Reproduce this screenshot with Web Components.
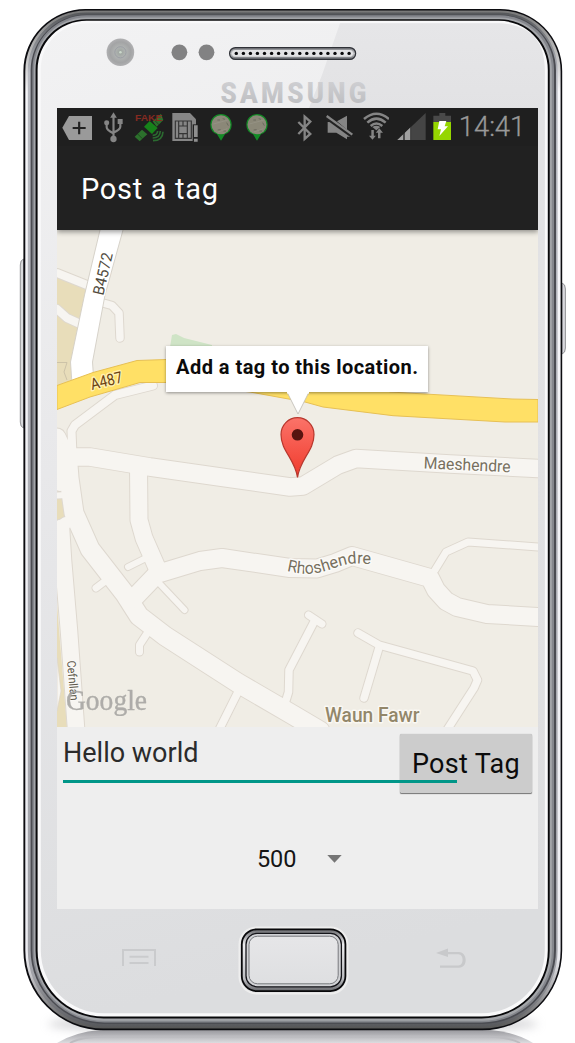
<!DOCTYPE html>
<html lang="en"><head><meta charset="utf-8"><title>Post a tag</title>
<style>html,body{margin:0;background:#fff;overflow:hidden}body{font-family:Roboto,"Liberation Sans",sans-serif}</style></head>
<body>
<phone-frame>
  <status-bar></status-bar>
  <app-bar>Post a tag</app-bar>
  <tag-map>Add a tag to this location.</tag-map>
  <tag-form><span slot="message">Hello world</span><span slot="action">Post Tag</span><span slot="radius">500</span></tag-form>
</phone-frame>
<script>
const define=(name,html,setup)=>customElements.define(name,class extends HTMLElement{
  constructor(){super();const r=this.attachShadow({mode:'open'});const t=document.createElement('template');
    t.innerHTML=typeof html==='function'?html(this):html;r.append(t.content.cloneNode(true));if(setup)setup(r,this);}
});

/* ---------- handset body ---------- */
const body=(l,t,r,b,fill,rt,rb)=>`<path fill="${fill}" d="M${l},${t+rt}A${rt},${rt} 0 0 1 ${l+rt},${t}H${r-rt}A${rt},${rt} 0 0 1 ${r},${t+rt}V${b-rb}A${rb},${rb} 0 0 1 ${r-rb},${b}H${l+rb}A${rb},${rb} 0 0 1 ${l},${b-rb}Z"/>`;
const shell=[
 [23.4,9,562.2,1030.3,'#0c0c10',62,80],
 [25.3,10.4,560.6,1028.6,'url(#rimA)',60.5,78],
 [27.8,12.4,557.6,1026.6,'url(#rimB)',58,76],
 [30.6,14.6,556,1024,'#4b4c52',56,74],
 [32.4,15.3,554,1022.5,'#85878d',54,72],
 [34,17.6,551.8,1020.8,'#a3a5a9',52,70],
 [35.6,19.2,549.7,1018.4,'#08080a',50.5,68],
 [37.6,20.8,547.8,1016.6,'#f9f9fa',49,66],
 [40.8,23.2,544.8,1013.2,'url(#face)',46,63]
].map(a=>body(...a)).join('');
const holes=Array.from({length:17},(_,i)=>`<circle cx="${(236.3+i*7.05).toFixed(1)}" cy="53.4" r="1.7"/>`).join('');
define('phone-frame',`<style>
:host{display:block;position:relative;box-sizing:border-box;width:575px;height:1043px;padding:108px 37px 134px 57px;overflow:hidden}
.shell{position:absolute;inset:0;display:block}
.screen{position:relative;display:grid;grid-template-rows:38px 84px 497px 182px;height:801px;background:#eee}
</style>
<svg class="shell" width="575" height="1043" viewBox="0 0 575 1043">
<defs>
<linearGradient id="rimA" x1="0" y1="0" x2="0" y2="1"><stop offset="0" stop-color="#777"/><stop offset=".03" stop-color="#aaa"/><stop offset=".08" stop-color="#f6f6f9"/><stop offset=".93" stop-color="#ececf1"/><stop offset="1" stop-color="#555"/></linearGradient>
<linearGradient id="rimB" x1="0" y1="0" x2="0" y2="1"><stop offset="0" stop-color="#55575a"/><stop offset=".06" stop-color="#b9bbc2"/><stop offset=".95" stop-color="#a2a3a9"/><stop offset="1" stop-color="#57585c"/></linearGradient>
<linearGradient id="face" x1="0" y1="0" x2=".12" y2="1"><stop offset="0" stop-color="#f2f2f3"/><stop offset=".45" stop-color="#e8e8ea"/><stop offset="1" stop-color="#dcdddf"/></linearGradient>
<linearGradient id="glass" x1="0" y1="0" x2="0" y2="1"><stop offset="0" stop-color="#e6e6e8"/><stop offset=".1" stop-color="#e2e2e4"/><stop offset="1" stop-color="#dcdcde" stop-opacity=".4"/></linearGradient>
<linearGradient id="logo" x1="0" y1="0" x2="0" y2="1"><stop offset="0" stop-color="#d3d3d6"/><stop offset="1" stop-color="#b9babd"/></linearGradient>
<linearGradient id="mesh" x1="0" y1="0" x2="0" y2="1"><stop offset="0" stop-color="#77797d"/><stop offset=".5" stop-color="#c9cacd"/><stop offset="1" stop-color="#66686d"/></linearGradient>
<radialGradient id="cam"><stop offset="0" stop-color="#9ba39d"/><stop offset=".4" stop-color="#b0b3b2"/><stop offset=".75" stop-color="#a3a4a5"/><stop offset="1" stop-color="#b0b0b2"/></radialGradient>
<linearGradient id="keyFill" x1="0" y1="0" x2="0" y2="1"><stop offset="0" stop-color="#e6e6e8"/><stop offset="1" stop-color="#dedfe1"/></linearGradient>
<linearGradient id="keyRim" x1="0" y1="0" x2="0" y2="1"><stop offset="0" stop-color="#66676b"/><stop offset=".25" stop-color="#eeeef0"/><stop offset=".8" stop-color="#bdbec2"/><stop offset="1" stop-color="#67686c"/></linearGradient>
<linearGradient id="floor" x1="0" y1="0" x2="0" y2="1"><stop offset="0" stop-color="#99999e"/><stop offset="1" stop-color="#dcdcdf"/></linearGradient>
<filter id="soft" x="-10%" y="-100%" width="120%" height="300%"><feGaussianBlur stdDeviation="5"/></filter>
</defs>
<ellipse cx="293" cy="1024" rx="245" ry="11" fill="#a9a9ae" opacity=".5" filter="url(#soft)"/>
<path d="M57,1043Q75,1032 100,1030H490Q515,1032 533,1043Z" fill="url(#floor)"/>
<path d="M70,1043Q80,1037 105,1036.5H485Q510,1037 520,1043" fill="none" stroke="#bcbcc0" stroke-width="2"/>
<path d="M23.5,259Q20.3,260 20.3,265V422Q20.3,427 23.5,428Z" fill="#d9dadd" stroke="#88898c" stroke-width=".9"/>
<path d="M562,283Q565.4,284 565.4,289V348Q565.4,353 562,354Z" fill="#d9d9de" stroke="#88898c" stroke-width=".9"/>
${shell}
<path d="M340,23.2H499Q544.8,25 544.8,70V909H538V108H309L322,75Z" fill="url(#glass)"/>
<circle cx="120.4" cy="52.3" r="13.8" fill="url(#cam)"/><circle cx="120.4" cy="52.3" r="5.6" fill="none" stroke="#9698a0" stroke-width=".8"/><circle cx="120.4" cy="52.3" r="1.300" fill="#cbd8cb"/>
<circle cx="179.4" cy="52.3" r="7.9" fill="#828283"/><circle cx="206.5" cy="52.3" r="7.9" fill="#828283"/>
<rect x="229.6" y="47.6" width="126" height="11.8" rx="5.9" fill="url(#mesh)" stroke="#303238" stroke-width="1.3"/><rect x="232" y="50" width="121" height="6.8" rx="3.4" fill="#e3e3e5"/><g fill="#08080a">${holes}</g>
<text transform="translate(220.500,103.300) scale(.88,1)" textLength="166" lengthAdjust="spacing" font-family="Roboto,'Liberation Sans',sans-serif" font-weight="900" font-size="29.5" fill="url(#logo)">SAMSUNG</text>
<rect x="239.5" y="927.5" width="108" height="66" rx="17" fill="none" stroke="#eee" stroke-width="2"/>
<rect x="241.8" y="929.3" width="103.6" height="61.8" rx="15" fill="url(#keyRim)" stroke="#08080a" stroke-width="1.8"/>
<rect x="246" y="933.4" width="95.4" height="53.4" rx="11" fill="#d1d2d5" stroke="#15151a" stroke-width="1.3"/>
<rect x="249" y="936.2" width="89.2" height="47.6" rx="8.5" fill="url(#keyFill)" stroke="#77797d" stroke-width="1"/>
<path d="M123,966V950H155V966M129.5,956.7H148.5M129.5,963H148.5" fill="none" stroke="#cacbcd" stroke-width="2"/>
<path d="M436,953L448,948.6V952H459C467.5,952 468.5,967.8 459,967.8H440V965.5H458.5C464,965.5 464,954.2 458.5,954.2H448V957Z" fill="#c8c9cb"/>
</svg>
<div class="screen"><slot></slot></div>`);

/* ---------- status bar: every glyph is drawn on a triple-size grid ---------- */
const balloon=x=>`<path d="M${x+33},42a32,32 0 0 1 32,32q0,21-20,29l-12,19l-12-19q-20-8-20-29a32,32 0 0 1 32-32z" fill="#138a26"/><circle cx="${x+33}" cy="74" r="28.5" fill="#8b8878"/><path d="M${x+22},60h8m8-4l7,2m-22,32l9-1m8,4h8M${x+50},68l5,9" fill="none" stroke="#5c5b52" stroke-width="2"/><path d="M${x+10},72l44,-12M${x+24},96l28-10" stroke="#98958a" stroke-width="2"/>`;
const glyphs={
 tag:[36,90,'<path fill="#9a9a9a" d="M37,83L57,48H126V120H57Z"/><path stroke="#222" stroke-width="6.500" d="M68,84h39M87.500,65v38"/>'],
 usb:[162,58,'<g fill="none" stroke="#858585" stroke-width="6.500"><path d="M190.500,48V116M170,70V82Q170,90 190,100M211,68V80Q211,88 190,98"/></g><g fill="#858585"><path d="M190.500,37l10,16h-20z"/><circle cx="190.500" cy="117" r="9.500"/><circle cx="170" cy="68" r="7.500"/><rect x="203" y="57" width="15" height="15"/></g>'],
 sat:[252,92,'<path d="M254,110l22-21l16,14l-23,21zM308,64l25-23l7,19l-20,20z" fill="#2c702c"/><path d="M282,80l17-17l24,21l-17,18z" fill="#17821a"/><path d="M263,102l14,14M313,60l14,14" stroke="#1d401f" stroke-width="2.500"/><path d="M308,106q14,0 15-13M308,114q22,0 23-21M309,122q29,0 30-27" stroke="#2b6a30" stroke-width="5" fill="none"/><text x="255" y="63" textLength="82" lengthAdjust="spacingAndGlyphs" font-family="Liberation Sans,sans-serif" font-weight="700" font-size="29" fill="#842a21">FAKE</text>'],
 sim:[366,78,'<path fill="#868686" d="M367,39H420L438,58V123H367Z"/><path d="M376,63h48v52h-48zM386,78h26v23h-26zM386,64v14M399,64v14M412,64v14M386,101v14M399,101v14M412,101v14" fill="none" stroke="#363636" stroke-width="3.500"/><path d="M428,73h20v55h-20z" fill="#222"/><path d="M432,76h11v35h-11zM432,116h11v9h-11z" fill="#8f8f8f"/>'],
 pin1:[480,66,balloon(480)],pin2:[588,66,balloon(588)],
 bt:[20,46,'<path d="M24,66L60,102L43,117V50L60,65L24,102" fill="none" stroke="#858585" stroke-width="7"/>'],
 mute:[108,82,'<path fill="#858585" d="M113,66h15l58,44h-15v8l-32-20h-26zM141,64l30-17v42z"/><path d="M108,54l80,58" stroke="#222" stroke-width="7"/><path d="M110,48l77,56" stroke="#858585" stroke-width="7"/>'],
 wifi:[218,80,'<g fill="none" stroke="#858585"><path d="M221,57Q258,25 296,57M231,68Q258,44 286,68M241,78Q258,63 276,78" stroke-width="7.500"/></g><path fill="#858585" d="M246,81q12-8 24,0l-12,10z"/><path fill="#858585" d="M243,90h7.500v17h6l-10,12l-10.500-12h7zM263,115h7.500V98h7.500l-11-13l-10.500,13h6.500z"/>'],
 signal:[322,86,'<path d="M408,39V120H323Z" fill="#454545"/><path d="M366,79V120H323Z" fill="#a0a0a0"/><path d="M343,90V120M364,76V120" stroke="#222" stroke-width="4"/>'],
 battery:[428,56,'<path fill="#494949" d="M447,39h18v8h18v20h-54V47h18z"/><path fill="#95d600" d="M429,66h54v54h-54z"/><path fill="#fff" d="M447,63h21l-5,16h10l-26,29l5-20h-10z"/>']
};
define('status-glyph',h=>{const [x,w,g]=glyphs[h.getAttribute('name')];return `<style>:host{display:block;flex:none;height:38px}svg{display:block}</style><svg width="${w/3}" height="38" viewBox="${x} 24 ${w} 114">${g}</svg>`});
const row=[['tag',5],['usb',12],['sat',10.67],['sim',7.33],['pin1',12],['pin2',14],['bt',28.67],['mute',14],['wifi',9.33],['signal',8],['battery',6.67]];
define('status-bar',`<style>:host{display:flex;background:#1f1f1f;color:#999;overflow:hidden}
.clock{margin-left:7.500px;font-size:27.500px;line-height:38px;letter-spacing:-.05px;font-weight:300;white-space:nowrap;-webkit-text-stroke:.3px #999}</style>
${row.map(([n,m])=>`<status-glyph name="${n}" style="margin-left:${m}px"></status-glyph>`).join('')}<span class="clock">14:41</span>`);

define('app-bar',`<style>:host{display:flex;align-items:center;box-sizing:border-box;padding:2px 24px 0;background:#212121;color:#fff;font-size:29px;letter-spacing:.68px;box-shadow:0 2px 5px rgba(0,0,0,.4);clip-path:inset(0 0 -10px 0);z-index:1;white-space:nowrap}</style><slot></slot>`);

/* ---------- map ---------- */
const roads=[
 ['57,273 87,285',8],['57,309 67,318 78,323',8],['103,303 112,305.500 119,313 120,338',7.500],
 ['153,385.500 115,395 75,425 71.500,431 72.500,455',8],
 ['57,437 69,462',17],['40,425 66,456',12],['60,456 60,484',14],
 ['68,457 90,457 150,467 220,477 290,487 303,486 338,465 356,458.500 450,464 538,468.500',17.500],
 ['67,452 69,478 74,513 90,549 125,594 139,616 165,636 238,683 293,715 320,731',19],
 ['57,495.500 66,495',6],['61,528 63,560 69,631 76.500,735',16.500],['66,523 56,530',12],
 ['138.500,467 139,520 144,538 158,570',17],
 ['133,599 157,574 200,561 222,558 290,568 317,568.500 335,563 352,556 430,578 436,590 446,601 457,607 487,614 538,617',18],
 ['435,570 446,552 468,542 538,547',7],
 ['128,567 146,558',6],['96,588 106,580.500',7],['159,583 184.500,610',6],['148,632 139.500,645 139.500,652',7],
 ['219,730 238,692',7.500],['315,620 289,670 288.500,692 283,710',7.500],['308.500,615 322,624',7],
 ['358,633 379,645 473,671 477.500,680 474,688 447,730',7.500],['379.500,646 364,698',7.500]];
const lines=(color,extra)=>roads.map(([p,w])=>`<polyline points="${p}" stroke="${color}" stroke-width="${w+extra}"/>`).join('');
define('tag-map',`<style>
:host{display:block;position:relative;overflow:hidden;background:#f0ede5}
svg{display:block}
.bubble{position:absolute;left:109px;top:116px;width:262px;height:46px;box-sizing:border-box;padding-left:10px;line-height:43px;font-size:20px;font-weight:700;letter-spacing:.47px;color:#0b0b0b;background:#fff;box-shadow:0 1px 3px rgba(0,0,0,.4);white-space:nowrap}
</style>
<svg width="481" height="497" viewBox="57 230 481 497" font-family="Roboto,'Liberation Sans',sans-serif">
<defs><linearGradient id="red" x1="0" y1="0" x2="0" y2="1"><stop offset="0" stop-color="#fb7369"/><stop offset="1" stop-color="#f03a2c"/></linearGradient>
<path id="bend" d="M286.500,571C300,574 308,575 321,572S342,564 354,563.500L378,564.500"/></defs>
<path d="M57,274L88,285L78,325L71,365V380L57,386ZM57,499H62L66,522L57,527ZM57,605L67,727H57Z" fill="#e8ddba"/>
<path d="M57,362.500H67L64,372L67,380" fill="none" stroke="#c9bfa6" stroke-width=".9"/>
<path d="M57,658L61,691L57,711Z" fill="#f7f5f1" stroke="#ddd6ca" stroke-width=".7"/>
<path d="M170,347L172,335L176,334L184,338L212,345V347Z" fill="#cfe4c6"/>
<g fill="none" stroke-linejoin="round" stroke-linecap="round">${lines('#ded8cf',2)}${lines('#f7f5f1',0)}</g>
<path d="M100,230L84.500,295L70.500,362L72,384H94L92.500,362L105,295L123,230" fill="#fff" stroke="#d3cec5" stroke-width=".9"/>
<path d="M57,385.500L93,372.500L137,360.500L167,359.500H330L390,392L512,399L538,399.500V422H505L393,415.700L323,407L305,402L250,392L167,382.500H140L90,397L57,409.500Z" fill="#ffe066" stroke="#e7c054" stroke-width="1"/>
<g stroke-linejoin="round" paint-order="stroke" stroke-width="3">
<text transform="translate(103.200,296) rotate(-77)" font-size="15.500" textLength="43" lengthAdjust="spacingAndGlyphs" fill="#514b3d" stroke="#fff">B4572</text>
<text transform="translate(92,390) rotate(-14)" font-size="16" textLength="32.500" lengthAdjust="spacingAndGlyphs" fill="#6b4313" stroke="#fff0b0">A487</text>
<text transform="translate(423.500,468.500) rotate(2.500)" font-size="16.500" textLength="87" lengthAdjust="spacingAndGlyphs" fill="#77705f" stroke="#fbfaf7">Maeshendre</text>
<text font-size="16.500" fill="#77705f" stroke="#fbfaf7" textLength="86" lengthAdjust="spacingAndGlyphs"><textPath href="#bend">Rhoshendre</textPath></text>
<text transform="translate(67,661) rotate(85)" font-size="12" textLength="40" lengthAdjust="spacingAndGlyphs" fill="#5f594c" stroke="#fbfaf7" stroke-width="2">Cefnllan</text>
<text x="325" y="721.800" font-size="19.500" font-weight="500" textLength="94.500" lengthAdjust="spacingAndGlyphs" fill="#93876a" stroke="#faf8f3">Waun Fawr</text>
</g>
<text x="66" y="709.500" font-family="'Liberation Serif',serif" font-size="30" textLength="81" lengthAdjust="spacingAndGlyphs" fill="#a5a4a1" stroke="#a5a4a1" stroke-width=".4" opacity=".88">Google</text>
<path d="M297.500,477.500C295,459 281,451 281,434.500A16.500,16.800 0 0 1 314,434.500C314,451 300,459 297.500,477.500Z" fill="url(#red)" stroke="#b8372d" stroke-width="1.200"/><circle cx="297.500" cy="434.800" r="5.800" fill="#571410"/>
</svg>
<div class="bubble"><slot></slot></div>
<svg width="24" height="24" viewBox="0 0 24 24" style="position:absolute;left:228.500px;top:161.500px"><path d="M1.500,1L12,22L22.500,1" fill="#fff" stroke="#bdbab2" stroke-width=".8"/><path d="M1,-1H23V1.500H1Z" fill="#fff"/></svg>`);

/* ---------- form ---------- */
define('tag-form',`<style>
:host{display:grid;grid-template-rows:66px 1fr;background:#eee}
.top{position:relative;display:grid;grid-template-columns:337px 132px;padding:6px 6px 0;white-space:nowrap}
.field{font-size:27px;line-height:40px;color:#2b2b2b;letter-spacing:0}
.line{position:absolute;left:6px;top:53px;width:394px;height:3px;background:#009688}
.button{box-sizing:border-box;height:59px;margin-top:.5px;text-align:center;line-height:61px;font-size:27px;color:#0b0b0b;letter-spacing:.3px;background:#ccc;border-radius:1.500px;box-shadow:0 1px 1px rgba(0,0,0,.5),0 0 1px rgba(0,0,0,.3)}
.pick{display:flex;align-items:center;gap:31px;padding:0 0 0 200px;height:131px;font-size:23.500px;color:#151515;letter-spacing:-.1px}
svg{display:block}
</style>
<div class="top"><div class="field"><slot name="message"></slot></div><div class="button"><slot name="action"></slot></div><i class="line"></i></div>
<div class="pick"><slot name="radius"></slot><svg width="15" height="8" viewBox="0 0 15 8"><path d="M.3,0H14.700L7.500,7.800Z" fill="#757575"/></svg></div>`);
</script>
</body></html>
